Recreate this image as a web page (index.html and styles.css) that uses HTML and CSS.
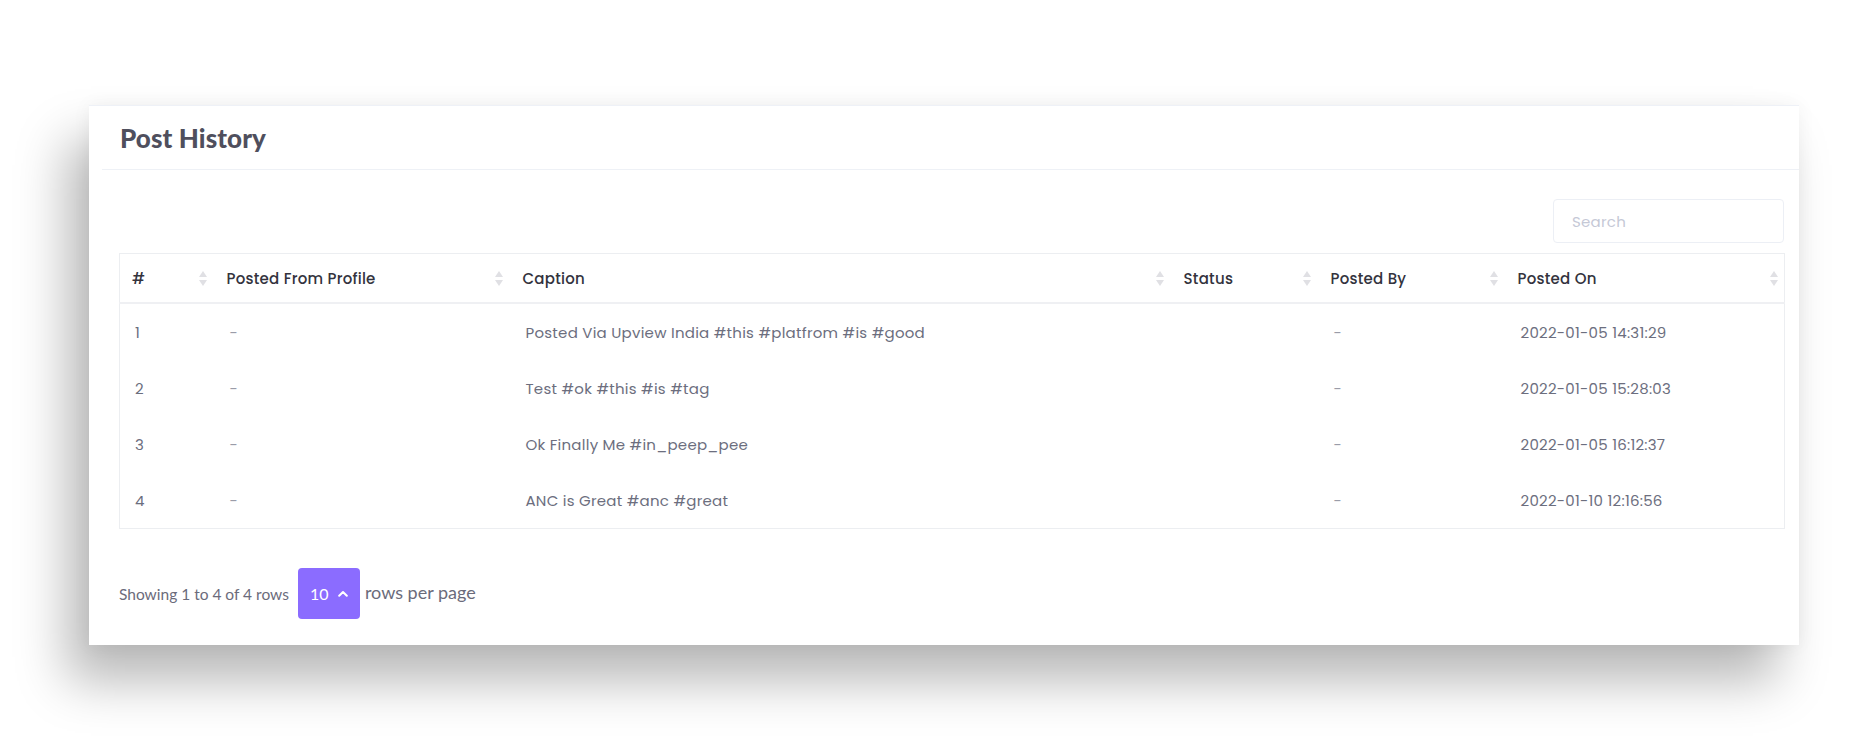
FILE: index.html
```html
<!DOCTYPE html>
<html lang="en">
<head>
<meta charset="utf-8">
<title>Post History</title>
<link rel="stylesheet" href="styles.css">
</head>
<body>
<div class="page">
  <div class="card">
    <div class="card-header">
      <h4 class="card-title">Post History</h4>
    </div>
    <div class="card-body">
      <div class="toolbar">
        <input class="search" type="text" placeholder="Search">
      </div>
      <table class="table">
        <colgroup>
          <col style="width:92px">
          <col style="width:296px">
          <col style="width:661px">
          <col style="width:147px">
          <col style="width:187px">
          <col style="width:282px">
        </colgroup>
        <thead>
          <tr>
            <th><div class="th-inner first"><span>#</span><span class="sort"></span></div></th>
            <th><div class="th-inner"><span>Posted From Profile</span><span class="sort"></span></div></th>
            <th><div class="th-inner"><span>Caption</span><span class="sort"></span></div></th>
            <th><div class="th-inner"><span>Status</span><span class="sort"></span></div></th>
            <th><div class="th-inner"><span>Posted By</span><span class="sort"></span></div></th>
            <th><div class="th-inner last"><span>Posted On</span><span class="sort"></span></div></th>
          </tr>
        </thead>
        <tbody>
          <tr><td class="num">1</td><td class="dash">-</td><td>Posted Via Upview India #this #platfrom #is #good</td><td></td><td class="dash">-</td><td>2022-01-05 14:31:29</td></tr>
          <tr><td class="num">2</td><td class="dash">-</td><td>Test #ok #this #is #tag</td><td></td><td class="dash">-</td><td>2022-01-05 15:28:03</td></tr>
          <tr><td class="num">3</td><td class="dash">-</td><td>Ok Finally Me #in_peep_pee</td><td></td><td class="dash">-</td><td>2022-01-05 16:12:37</td></tr>
          <tr><td class="num">4</td><td class="dash">-</td><td>ANC is Great #anc #great</td><td></td><td class="dash">-</td><td>2022-01-10 12:16:56</td></tr>
        </tbody>
      </table>
      <div class="pagination">
        <span class="info">Showing 1 to 4 of 4 rows</span>
        <button class="page-size" type="button">
          <span>10</span>
          <svg class="chev" width="10" height="7" viewBox="0 0 10 7"><path d="M1.2 5.8 L5 2 L8.8 5.8" fill="none" stroke="#ffffff" stroke-width="2" stroke-linecap="round" stroke-linejoin="round"/></svg>
        </button>
        <span class="per-page">rows per page</span>
      </div>
    </div>
  </div>
</div>
</body>
</html>
```

FILE: styles.css
```css
html, body {
  margin: 0;
  padding: 0;
  background: #ffffff;
}

body {
  font-family: "Poppins", "Inter", "Open Sans", sans-serif;
  color: #6c6e7e;
}

.page {
  min-height: 748px;
  box-sizing: border-box;
  padding: 105px 50px 0 89px;
}

.card {
  width: 1710px;
  height: 540px;
  box-sizing: border-box;
  background: #ffffff;
  border-top: 1px solid #eef1f7;
  box-shadow: -22px 36px 48px rgba(0, 0, 0, 0.28), 0 0 18px rgba(0, 0, 0, 0.05);
}

.card-header {
  margin-left: 13px;
  height: 63px;
  border-bottom: 1px solid #eef1f6;
  display: flex;
  align-items: center;
  padding-left: 18px;
}

.card-title {
  margin: 0;
  font-family: "Lato", sans-serif;
  font-weight: 900;
  font-size: 26px;
  color: #4f4f5d;
  letter-spacing: 0.1px;
}

.card-body {
  padding: 29px 15px 0 30px;
}

.toolbar {
  display: flex;
  justify-content: flex-end;
  margin-bottom: 10px;
}

.search {
  width: 231px;
  height: 44px;
  box-sizing: border-box;
  border: 1px solid #eceff5;
  border-radius: 4px;
  padding: 0 18px;
  font-family: "Poppins", "Inter", "Open Sans", sans-serif;
  font-size: 15px;
  letter-spacing: 0.25px;
  color: #6c6e7e;
  outline: none;
}

.search::placeholder {
  color: #c5c8d6;
}

.table {
  width: 1665px;
  table-layout: fixed;
  border-collapse: collapse;
  border: 1px solid #eceef1;
}

.table th {
  padding: 0;
  height: 48px;
  border-bottom: 2px solid #eff0f3;
  font-weight: 500;
  font-size: 15px;
  letter-spacing: 0.25px;
  color: #33333d;
  text-align: left;
}

.th-inner {
  display: flex;
  align-items: center;
  justify-content: space-between;
  padding: 0 5px 0 15px;
}

.th-inner.first {
  padding-left: 12px;
}

.th-inner.last {
  padding-right: 6px;
}

.sort {
  width: 8px;
  height: 15px;
  display: flex;
  flex-direction: column;
  justify-content: space-between;
}

.sort::before,
.sort::after {
  content: "";
  display: block;
  width: 0;
  height: 0;
  border-left: 4px solid transparent;
  border-right: 4px solid transparent;
}

.sort::before {
  border-bottom: 6px solid #e0e0e4;
}

.sort::after {
  border-top: 6px solid #e0e0e4;
}

.table td {
  height: 56px;
  padding: 0 0 0 18px;
  font-size: 15px;
  letter-spacing: 0.25px;
  color: #6c6e7e;
  white-space: nowrap;
}

.table td.num {
  padding-left: 15px;
}

.table td.dash {
  color: #9a9ca8;
}

.pagination {
  display: flex;
  align-items: center;
  margin-top: 39px;
}

.info {
  font-family: "Lato", sans-serif;
  font-size: 15.5px;
  color: #6b6b7b;
  margin-right: 9px;
}

.page-size {
  width: 62px;
  height: 51px;
  border: none;
  border-radius: 4px;
  background: #8b6cff;
  color: #ffffff;
  font-family: "Lato", sans-serif;
  font-size: 16px;
  display: flex;
  align-items: center;
  justify-content: center;
  gap: 9px;
  padding: 0;
}

.chev {
  display: block;
}

.per-page {
  font-family: "Lato", sans-serif;
  font-size: 18px;
  color: #6b6b7b;
  margin-left: 5px;
  position: relative;
  top: -2px;
}
```
